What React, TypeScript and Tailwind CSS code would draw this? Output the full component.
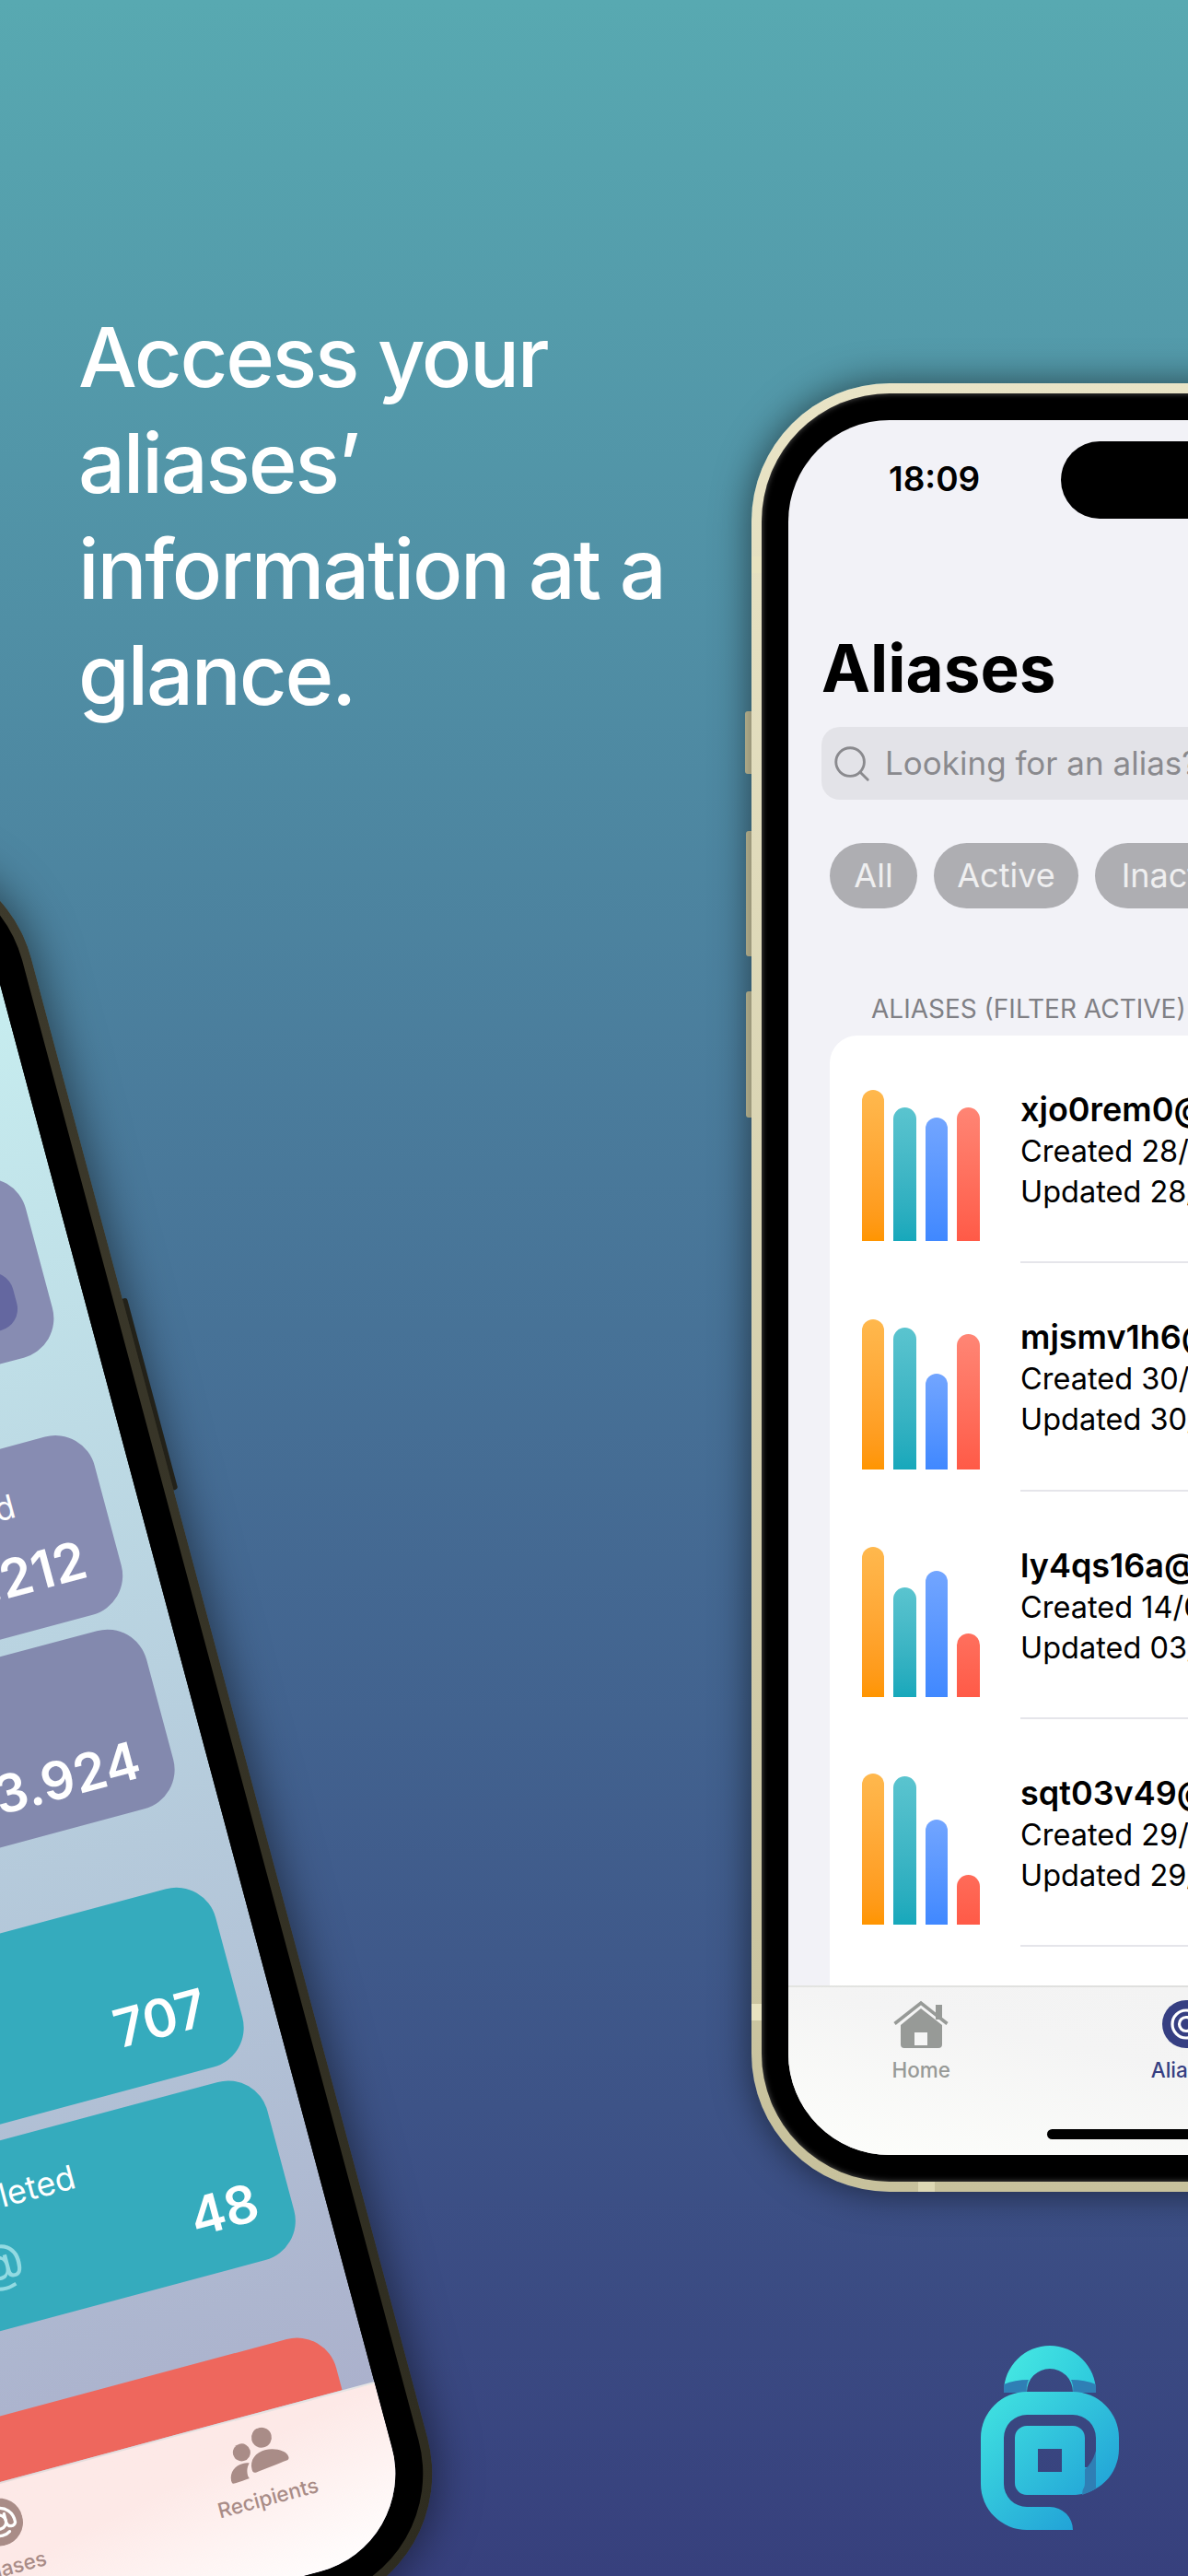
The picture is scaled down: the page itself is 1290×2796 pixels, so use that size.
import React from 'react';
import { Search } from 'lucide-react';

const aliases = [
  { name: 'xjo0rem0@anonaddy.me', created: 'Created 28/06/2023', updated: 'Updated 28/06/2023', bars: [164, 145, 134, 145] },
  { name: 'mjsmv1h6@anonaddy.me', created: 'Created 30/06/2023', updated: 'Updated 30/06/2023', bars: [163, 154, 104, 147] },
  { name: 'ly4qs16a@anonaddy.me', created: 'Created 14/06/2023', updated: 'Updated 03/07/2023', bars: [163, 119, 137, 69] },
  { name: 'sqt03v49@anonaddy.me', created: 'Created 29/06/2023', updated: 'Updated 29/06/2023', bars: [164, 161, 114, 54] },
];

const HomeIcon = ({ color }: { color: string }) => (
  <svg width="60" height="52" viewBox="0 0 60 52" fill="none">
    <path d="M46 5h7v16h-7z" fill={color} />
    <path d="M1.5 25.5 30 3l28.5 22.5" stroke={color} strokeWidth="3.6" />
    <path
      fillRule="evenodd"
      d="M30 9 53 27v21a4 4 0 0 1-4 4H12a4 4 0 0 1-4-4V27L30 9Zm-7 26v14h14V35H23Z"
      fill={color}
    />
  </svg>
);

const AliasIcon = ({ color }: { color: string }) => (
  <svg width="52" height="52" viewBox="0 0 52 52" fill="none">
    <circle cx="26" cy="26" r="26" fill={color} />
    <circle cx="26" cy="26" r="7.5" stroke="white" strokeWidth="3.2" />
    <path
      d="M33.5 18.5V29a5 5 0 0 0 9.5 1.5C44 20 37 11 26 11a15 15 0 0 0 0 30c3.4 0 6.2-.8 8.5-2.4"
      stroke="white"
      strokeWidth="3.2"
      strokeLinecap="round"
    />
  </svg>
);

const RecipientsIcon = ({ color }: { color: string }) => (
  <svg width="68" height="52" viewBox="0 0 68 52" fill={color}>
    <circle cx="44" cy="11" r="11" />
    <path d="M25 42c0-11 9-17 19-17s23 6 23 14c0 2-1 3-3 3-9 1-26 3-35 4-3 0-4-1-4-4Z" />
    <circle cx="19" cy="21" r="9.5" />
    <path d="M0 49c0-10 8-16 17-16 3 0 5 .5 7 1.500-3 3-5 7-5 12 0 2 .5 3 1 4-5 .5-11 1-16 1-3 0-4-.500-4-2.500Z" />
  </svg>
);

const TabBar = ({ bg, muted, active }: { bg: string; muted: string; active: string }) => (
  <div className={`h-[184px] shrink-0 flex flex-col border-t-2 border-black/10 ${bg}`}>
    <div className="grid grid-cols-3 pt-[14px] text-[22.5px] leading-[28px] font-medium">
      <div className="flex flex-col items-center gap-[10px]" style={{ color: muted }}>
        <HomeIcon color={muted} />
        <span>Home</span>
      </div>
      <div className="flex flex-col items-center gap-[10px]" style={{ color: active }}>
        <AliasIcon color={active} />
        <span>Aliases</span>
      </div>
      <div className="flex flex-col items-center gap-[10px]" style={{ color: muted }}>
        <RecipientsIcon color={muted} />
        <span>Recipients</span>
      </div>
    </div>
    <div className="mt-auto mb-[17px] mx-auto w-[304px] h-[11px] rounded-full bg-black" />
  </div>
);

const AliasRow = ({ alias }: { alias: (typeof aliases)[number] }) => (
  <div className="flex h-[247.3px] pl-[35px]">
    <div className="w-[172px] shrink-0 self-end mb-[24px] flex items-end gap-[10px]">
      <div
        className="w-[24px] rounded-t-full bg-gradient-to-b from-[#ffb84d] to-[#ff9500]"
        style={{ height: alias.bars[0] }}
      />
      <div
        className="w-[25px] rounded-t-full bg-gradient-to-b from-[#5ac4cf] to-[#16a8bb]"
        style={{ height: alias.bars[1] }}
      />
      <div
        className="w-[24px] rounded-t-full bg-gradient-to-b from-[#72a5ff] to-[#4088ff]"
        style={{ height: alias.bars[2] }}
      />
      <div
        className="w-[25px] rounded-t-full bg-gradient-to-b from-[#ff8a7a] to-[#ff5a47] bg-[length:100%_165px] bg-bottom bg-no-repeat"
        style={{ height: alias.bars[3] }}
      />
    </div>
    <div className="flex-1 flex flex-col justify-center pt-[4px] text-[32.5px] leading-[44px] text-black whitespace-nowrap border-b-2 border-[#e5e5ea]">
      <div className="text-[36px] leading-[47px] font-semibold">{alias.name}</div>
      <div>{alias.created}</div>
      <div>{alias.updated}</div>
    </div>
  </div>
);

const AliasesScreen = () => (
  <div className="h-full flex flex-col bg-[#f2f2f7]">
    <div className="flex-1 min-h-0 overflow-hidden">
      <div className="relative h-[226px] pl-[109px] pt-[42px] text-[37px] leading-[44px] font-semibold text-black">
        18:09
        <div className="absolute left-[296px] top-[23px] w-[272px] h-[84px] rounded-full bg-black" />
      </div>
      <h1 className="pl-[36px] text-[71px] leading-[86px] font-bold text-black">Aliases</h1>
      <div className="mt-[21px] mx-[36px] h-[79px] rounded-[20px] bg-[#e3e3e8] flex items-center pl-[10px] text-[35px] text-[#8a8a8e]">
        <Search size={46} strokeWidth={1.5} />
        <span className="ml-[13px] whitespace-nowrap">Looking for an alias?</span>
      </div>
      <div className="mt-[47px] ml-[45px] flex gap-[18px] text-[36px] leading-[71px] text-white/80">
        <div className="w-[95px] text-center rounded-full bg-[#aeaeb2]">All</div>
        <div className="w-[157px] text-center rounded-full bg-[#aeaeb2]">Active</div>
        <div className="w-[190px] text-center rounded-full bg-[#aeaeb2]">Inactive</div>
      </div>
      <div className="mt-[92px] pl-[90px] text-[28px] leading-[34px] text-[#808085] whitespace-nowrap">
        ALIASES (FILTER ACTIVE)
      </div>
      <div className="mt-[12px] ml-[45px] w-[775px] rounded-t-[30px] bg-white">
        {aliases.map((alias) => (
          <AliasRow key={alias.name} alias={alias} />
        ))}
        <div className="h-[60px]" />
      </div>
    </div>
    <TabBar
      bg="bg-gradient-to-tr from-[#fdfefb] via-[#f4f4f4] to-[#f2f2f2]"
      muted="#979a97"
      active="#363f82"
    />
  </div>
);

const StatCard = ({ tone, label, labelAt, value, valueAt, glyph }: { tone: string; label?: string; labelAt?: string; value?: string; valueAt: string; glyph?: boolean }) => (
  <div className={`relative h-[200px] w-[387px] shrink-0 rounded-[44px] text-white whitespace-nowrap ${tone}`}>
    {label && <div className={`text-[36px] leading-[44px] ${labelAt}`}>{label}</div>}
    {glyph && <div className="pl-[35px] mt-[16px] text-[56px] leading-[64px] text-[#93dae2]">@</div>}
    {value && (
      <div className={`absolute right-[36px] text-[57px] leading-[68px] font-semibold ${valueAt}`}>
        {value}
      </div>
    )}
  </div>
);

const StatsScreen = () => (
  <div className="h-full flex flex-col bg-gradient-to-b from-[#c9f2f2] via-[#b7cfde] to-[#a8aac8]">
    <div className="flex-1 min-h-0 overflow-hidden pt-[327px] pr-[36px] flex flex-col items-end">
      <div className="relative h-[200px] w-[387px] shrink-0 rounded-[44px] bg-[#878cb2]">
        <div className="absolute right-[36px] top-[101px] w-[110px] h-[64px] rounded-[24px] bg-[#6467a0]" />
      </div>
      <div className="mt-[89px]">
        <StatCard tone="bg-[#878cb2]" label="Total Received" labelAt="pl-[42px] pt-[41px]" value="3.212" valueAt="bottom-[27px]" />
      </div>
      <div className="mt-[18px]">
        <StatCard tone="bg-[#8389ae]" value="13.924" valueAt="bottom-[20px]" />
      </div>
      <div className="mt-[90px]">
        <StatCard tone="bg-[#35abbd]" value="707" valueAt="bottom-[32px]" />
      </div>
      <div className="mt-[17px]">
        <StatCard tone="bg-[#35abbd]" label="Deleted" labelAt="pl-[35px] pt-[36px]" value="48" valueAt="bottom-[30px]" glyph />
      </div>
      <div className="mt-[89px] h-[200px] w-full shrink-0 rounded-[44px] bg-[#ee675d]" />
    </div>
    <TabBar
      bg="bg-gradient-to-br from-[#fde9e7] via-[#fde9e7] to-[#ffffff]"
      muted="#a98c87"
      active="#a98c87"
    />
  </div>
);

const Logo = () => (
  <svg className="absolute left-[1030px] top-[2500px]" width="260" height="296" viewBox="0 0 260 296" fill="none">
    <defs>
      <linearGradient id="shackle" gradientUnits="userSpaceOnUse" x1="70" y1="55" x2="170" y2="110">
        <stop offset="0" stopColor="#44e6e2" />
        <stop offset="1" stopColor="#29c3dc" />
      </linearGradient>
      <linearGradient id="body" gradientUnits="userSpaceOnUse" x1="40" y1="110" x2="170" y2="240">
        <stop offset="0" stopColor="#3fe0e0" />
        <stop offset="1" stopColor="#1e9bd6" />
      </linearGradient>
    </defs>
    <path d="M60 97V96a50 50 0 0 1 100 0v1h-25v-1a25 25 0 0 0-50 0v1Z" fill="url(#shackle)" />
    <path d="M60 88q12-5 27-5a25 25 0 0 0-2 14H60ZM160 88q-12-5-27-5a25 25 0 0 1 2 14h25Z" fill="#2f7fb5" />
    <path
      d="M135 246H85a50 50 0 0 1-50-50v-50a50 50 0 0 1 50-50h50a50 50 0 0 1 50 50v12a50 50 0 0 1-50 50h-10v-30h35v-32a25 25 0 0 0-25-25H85a25 25 0 0 0-25 25v50a25 25 0 0 0 25 25h25a25 25 0 0 1 25 25Z"
      fill="url(#body)"
    />
    <path d="M148 180q8-6 12-20v41q-8 5-15 7Z" fill="#2f7fb5" />
    <path
      fillRule="evenodd"
      d="M85 133h50a13 13 0 0 1 13 13v49a13 13 0 0 1-13 13H85a13 13 0 0 1-13-13v-49a13 13 0 0 1 13-13Zm12 25v25h26v-25H97Z"
      fill="url(#body)"
    />
  </svg>
);

export default function App() {
  return (
    <div className="relative w-[1290px] h-[2796px] overflow-hidden bg-gradient-to-b from-[#58a9b1] to-[#37407d] font-['Inter',sans-serif]">
      <h2 className="pl-[85px] pt-[330px] text-[90px] leading-[115px] font-medium tracking-[-0.025em] text-white">
        Access your
        <br />
        aliases’
        <br />
        information at a
        <br />
        glance.
      </h2>

      {/* left phone, tilted and cut off by the page */}
      <div className="absolute left-[-442px] top-[828px] w-[945px] h-[1963px] origin-bottom-right rotate-[-15deg]">
        <div className="absolute right-[-5px] top-[533px] w-[10px] h-[215px] rounded-[3px] bg-[#2f2d22]" />
        <div className="relative h-full rounded-[150px] bg-gradient-to-b from-[#3d3a2c] to-[#2e2c20] p-[10px] shadow-[0_0_50px_rgba(0,0,0,0.55)]">
          <div className="h-full rounded-[140px] bg-black p-[30px]">
            <div className="h-full rounded-[110px] overflow-hidden">
              <StatsScreen />
            </div>
          </div>
        </div>
      </div>

      {/* right phone */}
      <div className="absolute left-[816px] top-[416px] w-[945px] h-[1963px]">
        <div className="absolute left-[-7px] top-[356px] w-[10px] h-[68px] rounded-l-[3px] bg-[#d6d1a9]" />
        <div className="absolute left-[-6px] top-[486px] w-[10px] h-[136px] rounded-l-[3px] bg-[#d6d1a9]" />
        <div className="absolute left-[-6px] top-[660px] w-[10px] h-[137px] rounded-l-[3px] bg-[#d6d1a9]" />
        <div className="relative h-full rounded-[150px] bg-gradient-to-b from-[#e9e4c6] to-[#c7c19c] p-[11px] shadow-[0_0_40px_rgba(0,0,0,0.55)]">
          <div className="h-full rounded-[139px] bg-black p-[29px] shadow-[inset_0_0_6px_rgba(255,255,255,0.35)]">
            <div className="h-full rounded-[110px] overflow-hidden">
              <AliasesScreen />
            </div>
          </div>
          {/* antenna bands */}
          <div className="absolute left-0 top-[188px] w-[11px] h-[18px] bg-[#e8e3c0]" />
          <div className="absolute left-0 top-[1759px] w-[11px] h-[18px] bg-[#e8e3c0]" />
          <div className="absolute left-[181px] bottom-0 w-[18px] h-[11px] bg-[#ddd8b4]" />
        </div>
      </div>

      <Logo />
    </div>
  );
}
